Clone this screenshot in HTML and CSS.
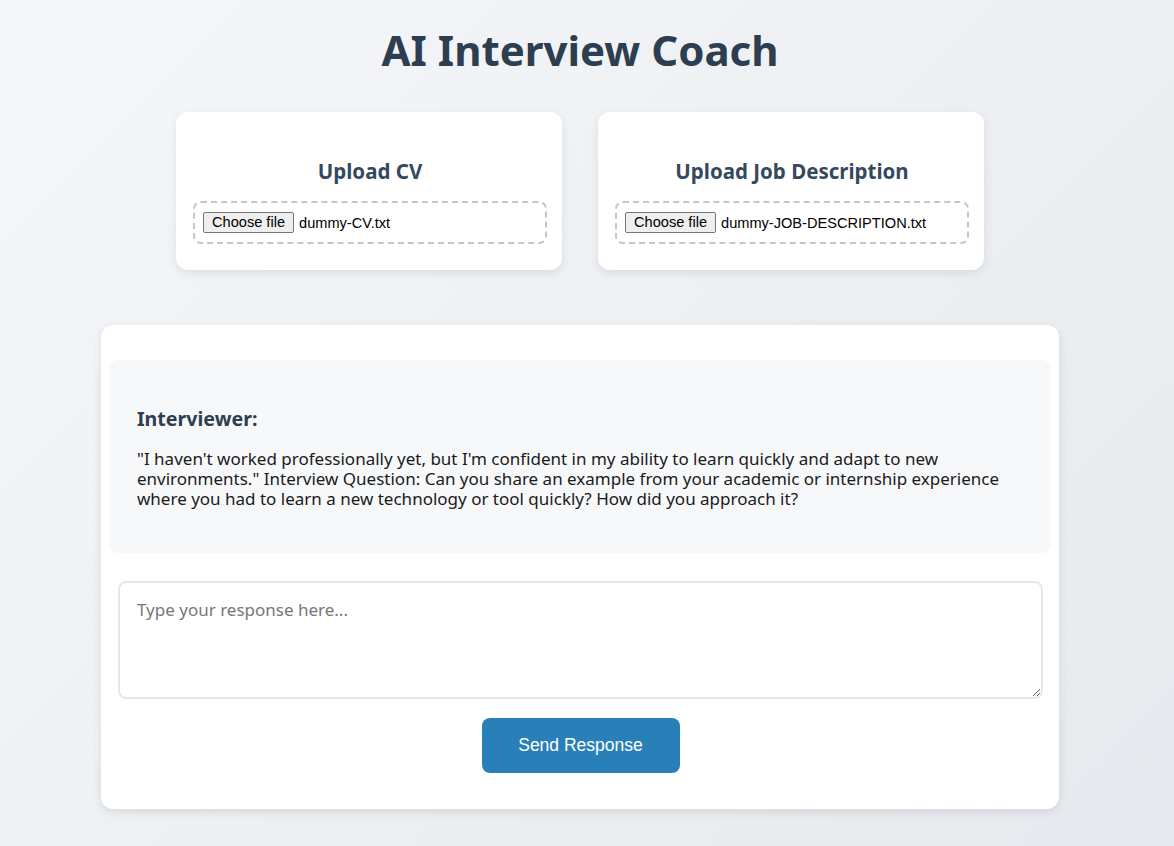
FILE: index.html
```html
<!DOCTYPE html>
<html lang="en">
<head>
<meta charset="utf-8">
<title>AI Interview Coach</title>
<link rel="stylesheet" href="styles.css">
</head>
<body>
<div class="page">
  <h1 class="title">AI Interview Coach</h1>

  <div class="uploads">
    <div class="upload-card">
      <h3 class="upload-title">Upload CV</h3>
      <div class="dropzone">
        <span class="file-btn">Choose file</span>
        <span class="file-name">dummy-CV.txt</span>
      </div>
    </div>
    <div class="upload-card">
      <h3 class="upload-title">Upload Job Description</h3>
      <div class="dropzone">
        <span class="file-btn">Choose file</span>
        <span class="file-name">dummy-JOB-DESCRIPTION.txt</span>
      </div>
    </div>
  </div>

  <div class="chat">
    <div class="message">
      <h3 class="speaker">Interviewer:</h3>
      <p class="message-text">"I haven't worked professionally yet, but I'm confident in my ability to learn quickly and adapt to new environments." Interview Question: Can you share an example from your academic or internship experience where you had to learn a new technology or tool quickly? How did you approach it?</p>
    </div>
    <div class="reply">
      <textarea class="reply-input" placeholder="Type your response here..."></textarea>
      <button class="send-btn" type="button">Send Response</button>
    </div>
  </div>
</div>
</body>
</html>
```

FILE: styles.css
```css
html, body {
  margin: 0;
  padding: 0;
}

body {
  min-height: 846px;
  background: linear-gradient(135deg, #f5f7f9 0%, #e6e9ed 100%);
  font-family: "Noto Sans", "DejaVu Sans", sans-serif;
  color: #2c3e50;
}

.page {
  width: 1160px;
  display: flex;
  flex-direction: column;
  align-items: center;
}

.title {
  margin: 23px 0 0;
  font-size: 42px;
  line-height: 54px;
  font-weight: 700;
  color: #2c3e50;
}

.uploads {
  display: flex;
  gap: 36px;
  margin-top: 35px;
}

.upload-card {
  width: 386px;
  height: 158px;
  box-sizing: border-box;
  padding: 45px 15px 0 17px;
  background: #ffffff;
  border-radius: 12px;
  box-shadow: 0 3px 10px rgba(0, 0, 0, 0.09);
}

.upload-title {
  margin: 0;
  text-align: center;
  font-size: 20.5px;
  line-height: 28px;
  font-weight: 700;
  color: #34495e;
}

.dropzone {
  margin-top: 16px;
  display: flex;
  align-items: center;
  gap: 5px;
  height: 43px;
  box-sizing: border-box;
  padding: 0 8px;
  border: 2px dashed #c4c6c9;
  border-radius: 8px;
  font-family: "Liberation Sans", Arial, sans-serif;
  font-size: 14.6px;
  color: #000;
}

.file-btn {
  display: inline-block;
  height: 21px;
  box-sizing: border-box;
  padding: 0 8px;
  line-height: 19px;
  background: #efefef;
  border: 1px solid #767676;
  border-radius: 2px;
  color: #000;
}

.chat {
  margin-top: 55px;
  width: 958px;
  box-sizing: border-box;
  padding: 35px 9px 36px;
  background: #ffffff;
  border-radius: 12px;
  box-shadow: 0 3px 10px rgba(0, 0, 0, 0.1);
}

.message {
  background: #f7f8fa;
  border-radius: 8px;
  padding: 47px 27px 44px;
  height: 193px;
  box-sizing: border-box;
}

.speaker {
  margin: 0;
  font-size: 19.6px;
  line-height: 24px;
  font-weight: 700;
  color: #2c3e50;
}

.message-text {
  margin: 18px 0 0;
  font-size: 17px;
  line-height: 20px;
  color: #1a1a1a;
}

.reply {
  padding: 28px 7px 0 8px;
  display: flex;
  flex-direction: column;
  align-items: center;
  gap: 19px;
}

.reply-input {
  display: block;
  width: 100%;
  height: 118px;
  box-sizing: border-box;
  padding: 16px 17px;
  border: 2px solid #e3e6ea;
  border-radius: 8px;
  font-family: "Noto Sans", "DejaVu Sans", sans-serif;
  font-size: 17px;
  line-height: 22px;
  color: #2c3e50;
  resize: vertical;
  background: #fff;
}

.reply-input::placeholder {
  color: #777;
}

.send-btn {
  width: 198px;
  height: 55px;
  border: none;
  border-radius: 8px;
  background: #2980b9;
  color: #ffffff;
  font-family: "Liberation Sans", Arial, sans-serif;
  font-size: 17.5px;
  cursor: pointer;
}
```
